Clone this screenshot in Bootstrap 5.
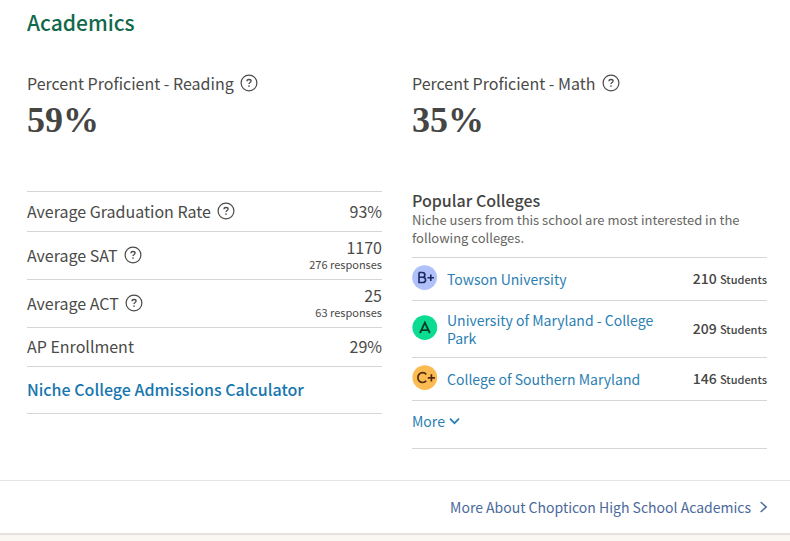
<!DOCTYPE html>
<html lang="en">
<head>
<meta charset="utf-8">
<meta name="viewport" content="width=device-width, initial-scale=1">
<title>Academics</title>
<link href="https://cdn.jsdelivr.net/npm/bootstrap@5.3.0/dist/css/bootstrap.min.css" rel="stylesheet">
<style>
  body { font-family: "Noto Sans CJK SC", "Noto Sans", sans-serif; font-size: 16px; line-height: 24px; color: #4a4a48; background: #faf6f1; }
  a { color: #2b80b3; text-decoration: none; }
  a:hover { text-decoration: underline; }
  .profile-block { background: #fff; border-bottom: 2px solid #e4e2e0; }
  .block-body { padding: 7px 23px 31px 27px; }
  .block-title { font-size: 21px; line-height: 30px; color: #10694b; margin-bottom: 33px; }
  .fact-columns { --bs-gutter-x: 30px; }
  .with-help { gap: 6px; }
  .help-btn { width: 18px; height: 25px; color: #4a4a48; }
  .score-value { font-family: "Liberation Serif", serif; font-weight: 700; font-size: 36px; line-height: 50px; color: #454543; }
  .scores { margin-bottom: 46px; }
  .ruled { border-color: #d6d6d6 !important; }
  .strong-text { font-weight: 500; }
  .fact-row { padding: 6px 0 8px; }
  .fact-row.with-note { padding: 5px 0 7px; }
  .fact-row.with-note dd { line-height: 20px; }
  .fact-note { font-size: 11px; line-height: 15px; }
  .calc-row { padding: 10px 0 12px; }
  .calc-row a { color: #1776ae; }
  .colleges-title { font-size: 16px; line-height: 18px; color: #454543; margin-bottom: 2px; }
  .colleges-intro { font-size: 13px; line-height: 18px; color: #666662; margin-bottom: 10px; }
  .college-row { font-size: 14px; line-height: 18px; padding: 7px 0 9px; }
  .college-name { padding: 3px 12px 1px 9px; }
  .college-count { font-size: 14px; color: #454543; }
  .college-count small { font-size: 11px; }
  .grade { width: 26px; height: 26px; }
  .more-row { padding: 8px 0 15px; }
  .more-btn { font-size: 14px; line-height: 24px; color: #2b80b3; }
  .block-footer { padding: 14px 22px; font-size: 14px; border-color: #e4e4e6 !important; }
  .block-footer a { color: #4a6a9c; }
</style>
<script src="https://cdn.jsdelivr.net/npm/bootstrap@5.3.0/dist/js/bootstrap.bundle.min.js"></script>
</head>
<body>
<svg class="d-none" aria-hidden="true">
  <symbol id="help" viewBox="0 0 18 18"><circle cx="9" cy="9" r="7.9" fill="none" stroke="currentColor" stroke-width="1.2"/><path d="M7 7.3C7 6.1 7.9 5.5 9 5.5S11.1 6.1 11.1 7.1C11.1 8.5 9 8.5 9 10.1" fill="none" stroke="currentColor" stroke-width="1.3"/><circle cx="9" cy="12" r=".85" fill="currentColor"/></symbol>
</svg>
<main class="profile-block">
  <section class="block-body" aria-labelledby="academics">
    <h2 class="block-title strong-text" id="academics">Academics</h2>
    <div class="row fact-columns scores">
      <div class="col-6">
        <div class="with-help d-flex align-items-center"><span>Percent Proficient - Reading</span><button type="button" class="help-btn btn btn-link p-0 border-0 d-flex align-items-center" aria-label="About reading proficiency"><svg width="18" height="18"><use href="#help"/></svg></button></div>
        <div class="score-value">59%</div>
      </div>
      <div class="col-6">
        <div class="with-help d-flex align-items-center"><span>Percent Proficient - Math</span><button type="button" class="help-btn btn btn-link p-0 border-0 d-flex align-items-center" aria-label="About math proficiency"><svg width="18" height="18"><use href="#help"/></svg></button></div>
        <div class="score-value">35%</div>
      </div>
    </div>
    <div class="row fact-columns">
      <div class="col-6">
        <dl class="mb-0 border-top ruled">
          <div class="fact-row d-flex justify-content-between align-items-center border-bottom ruled">
            <dt class="with-help fw-normal d-flex align-items-center">Average Graduation Rate<button type="button" class="help-btn btn btn-link p-0 border-0 d-flex align-items-center" aria-label="About graduation rate"><svg width="18" height="18"><use href="#help"/></svg></button></dt>
            <dd class="mb-0">93%</dd>
          </div>
          <div class="fact-row with-note d-flex justify-content-between align-items-center border-bottom ruled">
            <dt class="with-help fw-normal d-flex align-items-center">Average SAT<button type="button" class="help-btn btn btn-link p-0 border-0 d-flex align-items-center" aria-label="About average SAT"><svg width="18" height="18"><use href="#help"/></svg></button></dt>
            <dd class="mb-0 text-end">1170<div class="fact-note">276 responses</div></dd>
          </div>
          <div class="fact-row with-note d-flex justify-content-between align-items-center border-bottom ruled">
            <dt class="with-help fw-normal d-flex align-items-center">Average ACT<button type="button" class="help-btn btn btn-link p-0 border-0 d-flex align-items-center" aria-label="About average ACT"><svg width="18" height="18"><use href="#help"/></svg></button></dt>
            <dd class="mb-0 text-end">25<div class="fact-note">63 responses</div></dd>
          </div>
          <div class="fact-row d-flex justify-content-between align-items-center border-bottom ruled">
            <dt class="fw-normal">AP Enrollment</dt>
            <dd class="mb-0">29%</dd>
          </div>
        </dl>
        <div class="calc-row border-bottom ruled"><a class="strong-text" href="#calculator">Niche College Admissions Calculator</a></div>
      </div>
      <div class="col-6">
        <h3 class="colleges-title strong-text">Popular Colleges</h3>
        <p class="colleges-intro">Niche users from this school are most interested in the following colleges.</p>
        <ul class="list-unstyled mb-0 border-top ruled">
          <li class="college-row d-flex align-items-center border-bottom ruled">
            <svg class="grade flex-shrink-0" viewBox="0 0 26 26" role="img" aria-label="Grade B+"><circle cx="12.6" cy="12.6" r="12.4" fill="#b0c0f8"/><path d="M7 7.5V17.5H10.6C12.5 17.5 13.6 16.5 13.6 14.9S12.5 12.3 10.6 12.3H7M7 7.5H10.2C11.9 7.5 12.9 8.4 12.9 9.9S11.9 12.3 10.2 12.3M15.5 12.7H22M18.8 9.4V16" fill="none" stroke="#1c2a63" stroke-width="1.6"/></svg>
            <a class="college-name flex-fill" href="#towson">Towson University</a>
            <span class="college-count strong-text text-nowrap">210 <small>Students</small></span>
          </li>
          <li class="college-row d-flex align-items-center border-bottom ruled">
            <svg class="grade flex-shrink-0" viewBox="0 0 26 26" role="img" aria-label="Grade A"><circle cx="12.8" cy="12.6" r="12.4" fill="#0bdc92"/><path d="M8 18L12.9 7.7L17.8 18M9.7 15.1H16.1" fill="none" stroke="#0b3d2c" stroke-width="1.8"/></svg>
            <a class="college-name flex-fill" href="#umd">University of Maryland - College Park</a>
            <span class="college-count strong-text text-nowrap">209 <small>Students</small></span>
          </li>
          <li class="college-row d-flex align-items-center border-bottom ruled">
            <svg class="grade flex-shrink-0" viewBox="0 0 26 26" role="img" aria-label="Grade C+"><circle cx="12.8" cy="12.6" r="12.4" fill="#fbbb52"/><path d="M14.2 9.4C13.3 8.2 12 7.7 10.7 7.7C7.9 7.7 5.9 9.9 5.9 12.6S7.9 17.5 10.7 17.5C12 17.5 13.3 17 14.2 15.8M15.8 12.9H23M19.4 9.3V16.4" fill="none" stroke="#4f2b0c" stroke-width="1.7"/></svg>
            <a class="college-name flex-fill" href="#csm">College of Southern Maryland</a>
            <span class="college-count strong-text text-nowrap">146 <small>Students</small></span>
          </li>
        </ul>
        <div class="more-row border-bottom ruled"><button type="button" class="more-btn btn btn-link p-0 border-0 text-decoration-none d-flex align-items-center gap-1">More<svg width="11" height="8" viewBox="0 0 11 8" aria-hidden="true"><path d="M1 1.7L5.5 6.2L10 1.7" fill="none" stroke="currentColor" stroke-width="1.8"/></svg></button></div>
      </div>
    </div>
  </section>
  <footer class="block-footer border-top d-flex justify-content-end"><a class="d-flex align-items-center gap-2" href="#more">More About Chopticon High School Academics<svg width="9" height="12" viewBox="0 0 9 12" aria-hidden="true"><path d="M1.7 1L7.2 6L1.7 11" fill="none" stroke="currentColor" stroke-width="1.5"/></svg></a></footer>
</main>
</body>
</html>
